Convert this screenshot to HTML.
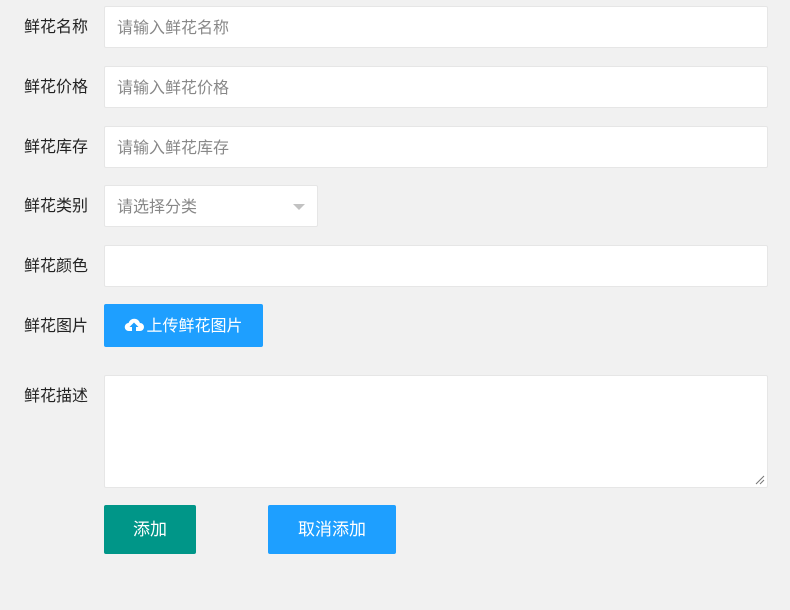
<!DOCTYPE html>
<html><head><meta charset="utf-8"><style>
body{margin:0;background:#f1f1f1;width:790px;height:610px;position:relative;font-family:"Liberation Sans","Noto Sans CJK SC",sans-serif;font-size:16px;overflow:hidden}
.l{position:absolute;left:24px;color:#222;line-height:20px}
.i{position:absolute;left:104px;width:662px;height:40px;background:#fff;border:1px solid #e6e6e6;border-radius:2px;color:#888;line-height:44px;box-sizing:content-box}
.i span{padding-left:12px}
.b{position:absolute;color:#fff;text-align:center;border-radius:2px}
</style></head><body>
<div class="l" style="top:18px">鲜花名称</div>
<div class="i" style="top:6px"><span>请输入鲜花名称</span></div>
<div class="l" style="top:78px">鲜花价格</div>
<div class="i" style="top:66px"><span>请输入鲜花价格</span></div>
<div class="l" style="top:138px">鲜花库存</div>
<div class="i" style="top:126px"><span>请输入鲜花库存</span></div>
<div class="l" style="top:197px">鲜花类别</div>
<div class="i" style="top:185px;width:212px"><span>请选择分类</span>
<div style="position:absolute;right:12px;top:18px;width:0;height:0;border-left:6px solid transparent;border-right:6px solid transparent;border-top:6px solid #c2c2c2"></div></div>
<div class="l" style="top:257px">鲜花颜色</div>
<div class="i" style="top:245px"></div>
<div class="l" style="top:317px">鲜花图片</div>
<div class="b" style="left:104px;top:304px;width:159px;height:43px;background:#1e9fff;line-height:45px">
<svg width="20" height="16" viewBox="0 0 20 16" style="vertical-align:-2px;margin-right:2px"><path d="M5 14a4 4 0 0 1-.5-8A6 6 0 0 1 16 6a4 4 0 0 1 0 8h-4v-4h2.5L10 5.5 5.5 10H8v4z" fill="#fff"/></svg>上传鲜花图片</div>
<div class="l" style="top:387px">鲜花描述</div>
<div class="i" style="top:375px;height:111px"><svg width="10" height="10" style="position:absolute;right:2px;bottom:2px"><path d="M9 1L1 9M9 5L5 9" stroke="#777" stroke-width="1"/></svg></div>
<div class="b" style="left:104px;top:505px;width:92px;height:49px;background:#009688;line-height:49px;font-size:17px">添加</div>
<div class="b" style="left:268px;top:505px;width:128px;height:49px;background:#1e9fff;line-height:49px;font-size:17px">取消添加</div>
</body></html>
